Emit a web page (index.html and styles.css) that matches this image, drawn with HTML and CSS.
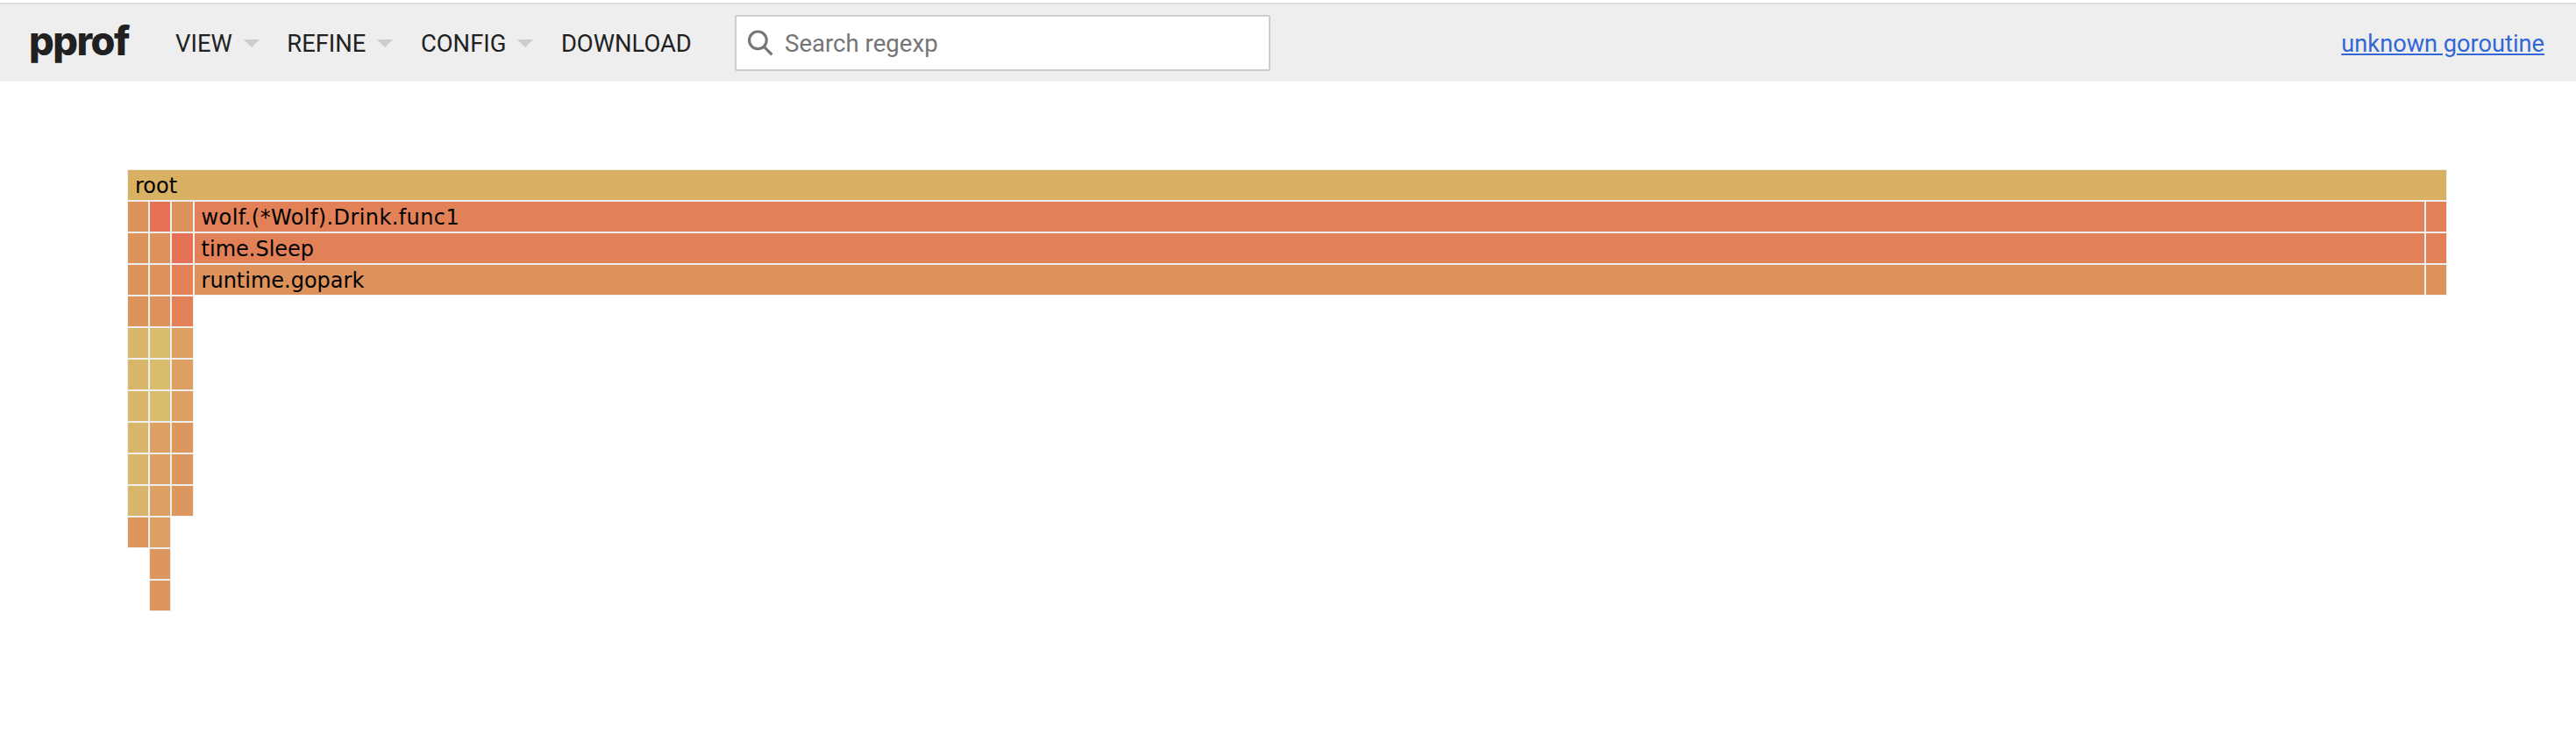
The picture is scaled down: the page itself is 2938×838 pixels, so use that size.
FILE: index.html
```html
<!DOCTYPE html>
<html lang="en">
<head>
<meta charset="utf-8">
<title>pprof</title>
<link rel="stylesheet" href="styles.css">
</head>
<body>
<header class="header">
  <div class="logo">pprof</div>
  <nav class="menu">
    <span class="menu-item">VIEW<i class="caret"></i></span>
    <span class="menu-item">REFINE<i class="caret"></i></span>
    <span class="menu-item">CONFIG<i class="caret"></i></span>
    <span class="menu-item">DOWNLOAD</span>
  </nav>
  <div class="search">
    <svg class="search-icon" viewBox="0 0 29 29" aria-hidden="true">
      <circle cx="12" cy="11.5" r="9.5" fill="none" stroke="#757575" stroke-width="3"/>
      <path d="M18.5 18.5 L27.5 27.5" stroke="#757575" stroke-width="3" fill="none"/>
    </svg>
    <span class="placeholder">Search regexp</span>
  </div>
  <a class="title" href="#">unknown goroutine</a>
</header>
<main class="flame">
  <div class="row"><div class="cell full gold">root</div></div>
  <div class="row">
    <div class="cell slim o1"></div><div class="cell slim r1"></div><div class="cell slim o1"></div>
    <div class="cell wide r2 label-wolf">wolf.(*Wolf).Drink.func1</div><div class="cell slim r2"></div>
  </div>
  <div class="row">
    <div class="cell slim o1"></div><div class="cell slim o1"></div><div class="cell slim r1"></div>
    <div class="cell wide r2">time.Sleep</div><div class="cell slim r2"></div>
  </div>
  <div class="row">
    <div class="cell slim o1"></div><div class="cell slim o1"></div><div class="cell slim r2"></div>
    <div class="cell wide o1">runtime.gopark</div><div class="cell slim o1"></div>
  </div>
  <div class="row">
    <div class="cell slim o1"></div><div class="cell slim o1"></div><div class="cell slim r2"></div>
  </div>
  <div class="row">
    <div class="cell slim y1"></div><div class="cell slim y2"></div><div class="cell slim o3"></div>
  </div>
  <div class="row">
    <div class="cell slim y1"></div><div class="cell slim y2"></div><div class="cell slim o3"></div>
  </div>
  <div class="row">
    <div class="cell slim y1"></div><div class="cell slim y2"></div><div class="cell slim o3"></div>
  </div>
  <div class="row">
    <div class="cell slim y1"></div><div class="cell slim o3"></div><div class="cell slim o2"></div>
  </div>
  <div class="row">
    <div class="cell slim y1"></div><div class="cell slim o3"></div><div class="cell slim o2"></div>
  </div>
  <div class="row">
    <div class="cell slim y1"></div><div class="cell slim o3"></div><div class="cell slim o2"></div>
  </div>
  <div class="row">
    <div class="cell slim o2"></div><div class="cell slim o3"></div>
  </div>
  <div class="row">
    <div class="spacer"></div><div class="cell slim o2"></div>
  </div>
  <div class="row">
    <div class="spacer"></div><div class="cell slim o2"></div>
  </div>
</main>
</body>
</html>
```

FILE: styles.css
```css
* { box-sizing: border-box; }
html, body { margin: 0; padding: 0; background: #fff; }
body { padding-top: 3px; font-family: Roboto, "Liberation Sans", sans-serif; }

.header {
  display: flex;
  align-items: center;
  height: 90px;
  background: #eeeeee;
  border-top: 2px solid #dddddd;
  padding: 0 36px 0 33px;
  color: #212121;
}
.logo {
  font-family: Inter, Roboto, sans-serif;
  font-size: 45px;
  font-weight: 800;
  letter-spacing: -1.5px;
  width: 167px;
  line-height: 1;
  margin-bottom: 6px;
  color: #212121;
}
.menu {
  display: flex;
  align-items: center;
  width: 638px;
  font-size: 27.4px;
  padding-top: 2px;
}
.menu-item {
  display: flex;
  align-items: center;
  margin-right: 31.5px;
  white-space: nowrap;
}
.caret {
  width: 0;
  height: 0;
  margin-left: 13px;
  border-left: 9px solid transparent;
  border-right: 9px solid transparent;
  border-top: 9px solid #cccccc;
  margin-bottom: 2px;
}
.search {
  display: flex;
  align-items: center;
  width: 611px;
  height: 64px;
  background: #fff;
  border: 2px solid #cccccc;
  border-radius: 2px;
  padding-left: 12px;
}
.search-icon { width: 30px; height: 30px; flex: none; }
.placeholder {
  margin-left: 13px;
  font-size: 27.6px;
  color: #757575;
  white-space: nowrap;
}
.title {
  margin-left: auto;
  padding-top: 2px;
  font-size: 27.2px;
  color: #3367d6;
  text-decoration: underline;
  white-space: nowrap;
}

.flame {
  width: 2646px;
  margin: 100px 0 0 145px;
}
.row { display: flex; height: 36px; }
.cell {
  flex: none;
  height: 36px;
  border: 1px solid #eeeeee;
  padding: 1px 0 0 8px;
  font-family: "DejaVu Sans", Verdana, sans-serif;
  font-size: 24px;
  line-height: 34px;
  color: #000;
  white-space: nowrap;
  overflow: hidden;
}
.label-wolf { letter-spacing: 0.4px; }
.full { width: 2646px; }
.slim, .spacer { flex: none; width: 25.2px; }
.wide { width: 2545.2px; }

.gold { background: #d8b163; }
.r1 { background: #e57154; }
.r2 { background: #e28058; }
.o1 { background: #dd915b; }
.o2 { background: #dd965e; }
.o3 { background: #dca063; }
.y1 { background: #d8b66b; }
.y2 { background: #d7bd6c; }
```
